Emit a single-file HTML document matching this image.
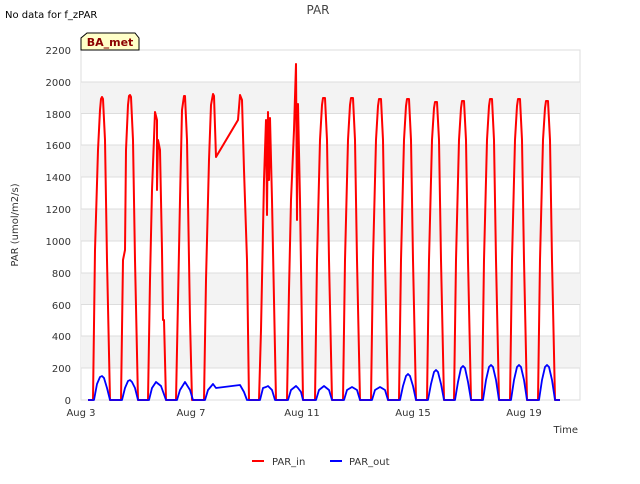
<!DOCTYPE html>
<html><head><meta charset="utf-8"><style>
body{margin:0;background:#fff;font-family:"DejaVu Sans","Liberation Sans",sans-serif;}
svg text{font-family:"DejaVu Sans","Liberation Sans",sans-serif;}
</style></head><body>
<svg width="640" height="480" viewBox="0 0 640 480" xmlns="http://www.w3.org/2000/svg">
<rect width="640" height="480" fill="#fff"/>
<text x="5" y="18" font-size="10" fill="#000">No data for f_zPAR</text>
<text x="318" y="14" font-size="12" fill="#444" text-anchor="middle">PAR</text>
<rect x="81" y="50" width="499" height="350" fill="#fff" stroke="#ddd"/>
<g fill="#f3f3f3">
<rect x="81" y="82" width="499" height="32"/>
<rect x="81" y="145" width="499" height="32"/>
<rect x="81" y="209" width="499" height="32"/>
<rect x="81" y="273" width="499" height="32"/>
<rect x="81" y="336" width="499" height="32"/>
</g>
<g stroke="#ddd" stroke-width="1">
<line x1="81" x2="580" y1="82" y2="82"/><line x1="81" x2="580" y1="113.5" y2="113.5"/>
<line x1="81" x2="580" y1="145" y2="145"/><line x1="81" x2="580" y1="177" y2="177"/>
<line x1="81" x2="580" y1="209" y2="209"/><line x1="81" x2="580" y1="241" y2="241"/>
<line x1="81" x2="580" y1="273" y2="273"/><line x1="81" x2="580" y1="304.5" y2="304.5"/>
<line x1="81" x2="580" y1="336" y2="336"/><line x1="81" x2="580" y1="368" y2="368"/>
</g>
<g font-size="10" fill="#333" text-anchor="end">
<text x="71" y="54">2200</text><text x="71" y="86">2000</text><text x="71" y="118">1800</text>
<text x="71" y="149">1600</text><text x="71" y="181">1400</text><text x="71" y="213">1200</text>
<text x="71" y="245">1000</text><text x="71" y="277">800</text><text x="71" y="309">600</text>
<text x="71" y="340">400</text><text x="71" y="372">200</text><text x="71" y="404">0</text>
</g>
<g font-size="10" fill="#333" text-anchor="middle">
<text x="81" y="416">Aug 3</text><text x="191" y="416">Aug 7</text><text x="302" y="416">Aug 11</text>
<text x="413" y="416">Aug 15</text><text x="524" y="416">Aug 19</text>
</g>
<text x="578" y="433" font-size="10" fill="#333" text-anchor="end">Time</text>
<text x="18" y="225" font-size="10" fill="#333" text-anchor="middle" transform="rotate(-90 18 225)">PAR (umol/m2/s)</text>
<path fill="none" stroke="#f00" stroke-width="2" stroke-linejoin="round" d="M88,400 L93,400 L95,250 L98,150 L100,110 L101,99 L102,97 L103,99 L105,140 L107,260 L110,400
L121,400 L123,260 L125,250 L126,150 L128,105 L129,96 L130,95 L131,97 L133,140 L135,260 L138,400
L148,400 L150,280 L152,190 L155,112 L157,120 L157,190 L158,140 L160,150 L162,250 L163,320 L164,320 L166,400
L176,400 L178,300 L180,200 L182,110 L184,96 L185,96 L187,140 L189,260 L190,320 L192,400
L204,400 L206,280 L209,160 L211,105 L213,94 L214,96 L216,157 L238,120 L240,95 L242,100 L244,170 L247,260 L249,400
L259,400 L261,330 L264,180 L266,120 L267,215 L268,112 L269,180 L270,118 L272,200 L276,400
L287,400 L289,290 L291,200 L294,130 L296,64 L297,220 L298,104 L300,200 L303,400
L315,400 L317,260 L320,140 L322,105 L323,98 L325,98 L327,140 L329,260 L332,400
L343,400 L345,260 L348,140 L350,105 L351,98 L353,98 L355,140 L357,260 L360,400
L371,400 L373,260 L376,140 L378,106 L379,99 L381,99 L383,140 L385,260 L388,400
L399,400 L401,260 L404,140 L406,106 L407,99 L409,99 L411,140 L413,260 L416,400
L427,400 L429,260 L432,140 L434,108 L435,102 L437,102 L439,140 L441,260 L444,400
L454,400 L456,260 L459,140 L461,108 L462,101 L464,101 L466,140 L468,260 L471,400
L482,400 L484,260 L487,140 L489,106 L490,99 L492,99 L494,140 L496,260 L499,400
L510,400 L512,260 L515,140 L517,106 L518,99 L520,99 L522,140 L524,260 L527,400
L538,400 L540,260 L543,140 L545,108 L546,101 L548,101 L550,140 L552,260 L555,400 L560,400"/>
<path fill="none" stroke="#00f" stroke-width="1.8" stroke-linejoin="round" d="M88,400 L94,400 L97,384 L100,377 L102,376 L104,378 L107,388 L110,400
L122,400 L125,388 L128,381 L130,380 L132,382 L135,388 L138,400
L149,400 L152,388 L156,382 L161,386 L166,400
L177,400 L180,390 L185,382 L190,390 L193,400
L205,400 L208,390 L213,384 L216,388 L240,385 L244,392 L247,400
L260,400 L263,388 L266,387 L268,386 L270,388 L272,390 L275,400
L288,400 L291,390 L296,386 L298,388 L301,392 L303,400
L316,400 L319,390 L324,386 L329,390 L332,400
L344,400 L347,390 L352,387 L357,390 L360,400
L372,400 L375,390 L380,387 L385,390 L388,400
L400,400 L403,386 L406,376 L408,374 L410,376 L413,386 L416,400
L428,400 L431,384 L434,372 L436,370 L438,372 L441,384 L444,400
L455,400 L458,382 L461,368 L463,366 L465,368 L468,382 L471,400
L483,400 L486,380 L489,367 L491,365 L493,367 L496,380 L499,400
L511,400 L514,380 L517,367 L519,365 L521,367 L524,380 L527,400
L539,400 L542,380 L545,367 L547,365 L549,367 L552,380 L555,400 L560,400"/>
<path d="M81,50 L81,38 L87,33 L135,33 L139,38 L139,50 Z" fill="#ffffc8" stroke="#000" stroke-width="1"/>
<text x="110" y="46" font-size="11" font-weight="bold" fill="#8b0000" text-anchor="middle">BA_met</text>
<line x1="252" x2="264" y1="461" y2="461" stroke="#f00" stroke-width="2"/>
<text x="272" y="465" font-size="10" fill="#333">PAR_in</text>
<line x1="330" x2="342" y1="461" y2="461" stroke="#00f" stroke-width="2"/>
<text x="349" y="465" font-size="10" fill="#333">PAR_out</text>
</svg>
</body></html>
